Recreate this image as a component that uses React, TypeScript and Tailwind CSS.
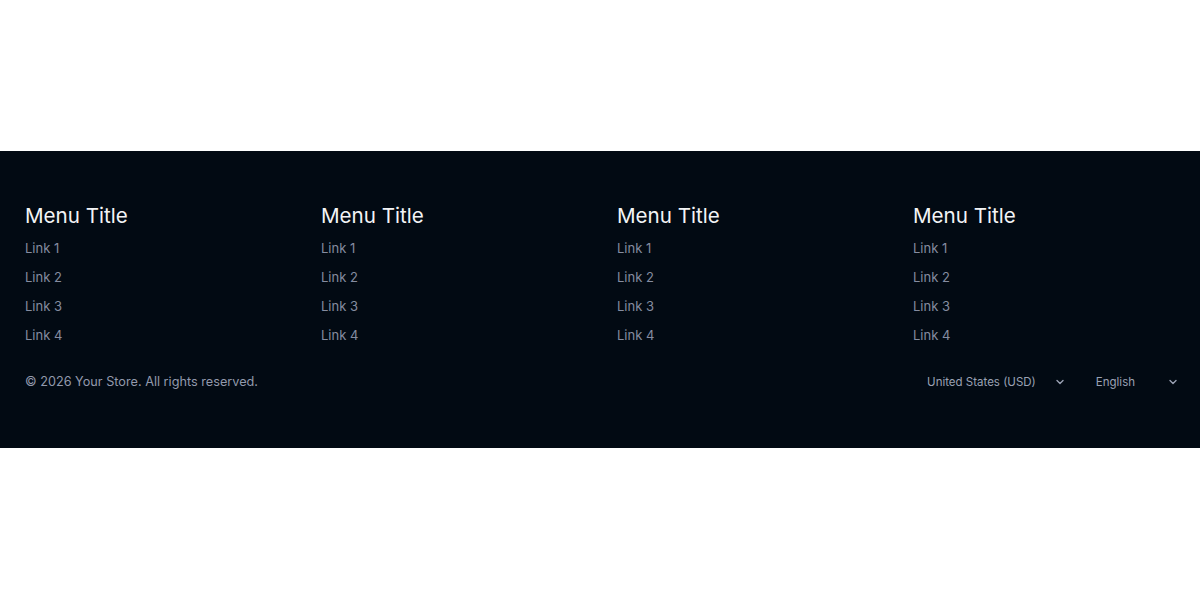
import React from "react";

const columns = [1, 2, 3, 4];
const links = ["Link 1", "Link 2", "Link 3", "Link 4"];

function Chevron() {
  return (
    <svg width="10" height="10" viewBox="0 0 10 10" fill="none" className="text-[#9aa1b3]">
      <path d="M2 3.5 L5 6.5 L8 3.5" stroke="currentColor" strokeWidth="1.4" strokeLinecap="round" strokeLinejoin="round" />
    </svg>
  );
}

export default function App() {
  return (
    <div className="min-h-[600px] bg-white flex flex-col" style={{ fontFamily: "Inter, 'Noto Sans', sans-serif" }}>
      <div className="h-[151px]" />
      <footer className="bg-[#020a13] px-[25px] pt-[51px] pb-[56px]">
        <div className="grid grid-cols-4 gap-[34px]">
          {columns.map((c) => (
            <div key={c} className="flex flex-col">
              <h3 className="text-[20.6px] leading-[28px] text-[#f3f4f6] font-normal">Menu Title</h3>
              <ul className="mt-[8px] flex flex-col gap-[9px]">
                {links.map((l) => (
                  <li key={l} className="text-[13px] leading-[20px] text-[#858ca0]">
                    {l}
                  </li>
                ))}
              </ul>
            </div>
          ))}
        </div>
        <div className="mt-[27px] flex items-center justify-between">
          <p className="text-[12.7px] leading-[20px] text-[#9299ac]">© 2026 Your Store. All rights reserved.</p>
          <div className="flex items-center gap-[31px] -mr-[3px]">
            <div className="flex items-center gap-[19px]">
              <span className="text-[11.5px] leading-[20px] text-[#9aa1b3]">United States (USD)</span>
              <Chevron />
            </div>
            <div className="flex items-center gap-[33px]">
              <span className="text-[11.5px] leading-[20px] text-[#9aa1b3]">English</span>
              <Chevron />
            </div>
          </div>
        </div>
      </footer>
      <div className="flex-1" />
    </div>
  );
}
